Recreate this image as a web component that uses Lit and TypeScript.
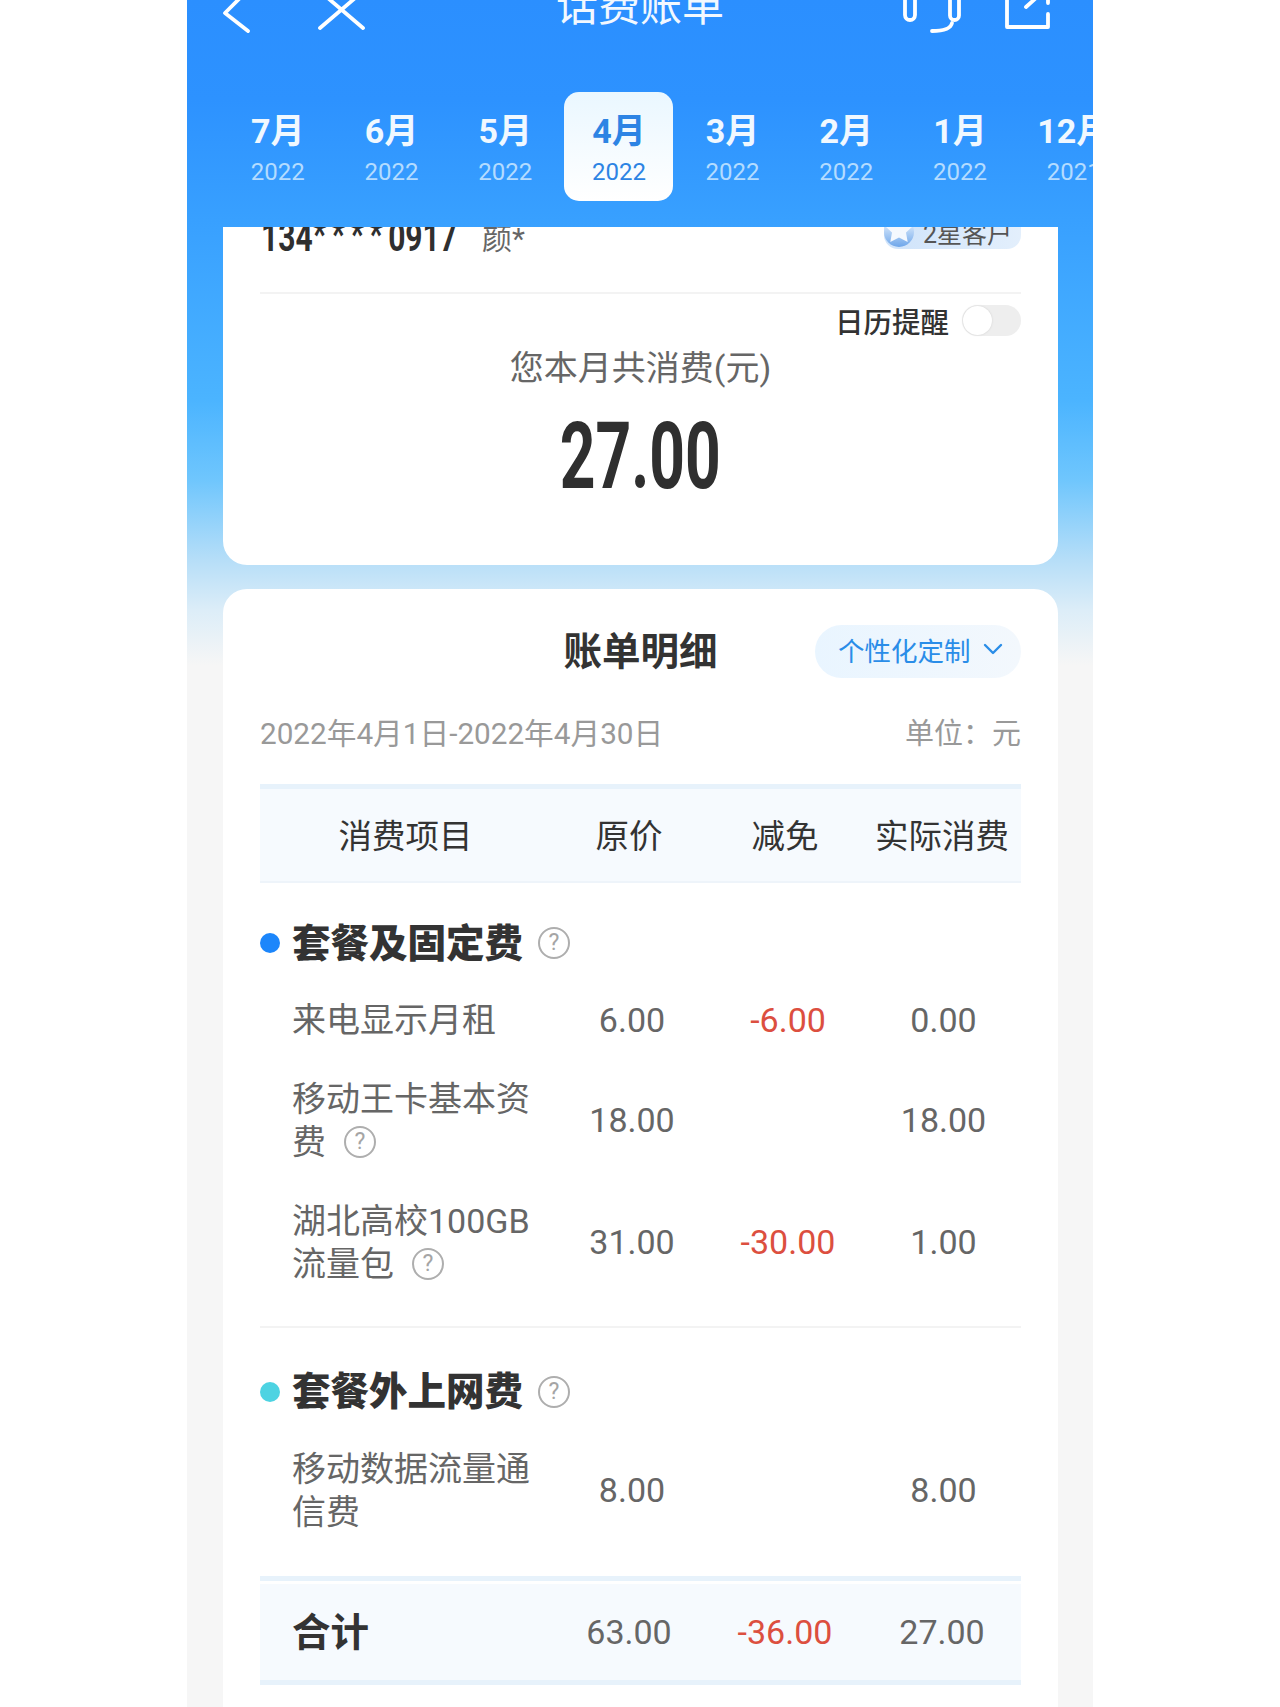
import { LitElement, html, css } from "lit";
import { customElement } from "lit/decorators.js";

const months = [
  ["7月", "2022"], ["6月", "2022"], ["5月", "2022"], ["4月", "2022"],
  ["3月", "2022"], ["2月", "2022"], ["1月", "2022"], ["12月", "2021"],
];

type Row = { name: unknown; a: string; b: string; c: string };

const q = html`<span class="q">?</span>`;

@customElement("app-root")
export class AppRoot extends LitElement {
  static styles = css`
    :host { display: block; width: 1280px; height: 1707px; overflow: hidden; background: #fff;
      font-family: Roboto, "Noto Sans CJK SC", sans-serif; color: #333; }
    .phone { width: 906px; height: 1707px; margin-left: 187px; overflow: hidden;
      display: flex; flex-direction: column;
      background: linear-gradient(180deg, #2b8fff 0, #2d92ff 100px, #38a0ff 220px, #4bb4ff 400px, #6fc6fd 480px, #b6def8 560px, #dcedf8 610px, #f6f6f6 665px); }
    header { height: 227px; flex: none; color: #fff; }
    .nav { height: 60px; margin-top: -23px; display: grid; grid-template-columns: 1fr auto 1fr; align-items: center; }
    .nav .left { display: flex; align-items: center; gap: 60px; padding: 8px 0 0 35px; }
    .nav .right { display: flex; align-items: center; justify-content: flex-end; gap: 40px; padding: 8px 41px 0 0; }
    .nav svg { display: block; fill: none; stroke: #fff; stroke-width: 3.8; stroke-linecap: round; stroke-linejoin: round; }
    .title { font-size: 42px; line-height: 60px; color: #f2f8ff; }
    .tabs { display: flex; margin-top: 55px; padding-left: 34px; }
    .tab { flex: none; width: 109px; height: 109px; margin: 0 2.35px; border-radius: 15px; display: flex; flex-direction: column; align-items: center; }
    .tab .m { font-size: 34px; line-height: 40px; margin-top: 19px; font-weight: 700; color: #f0f8ff; white-space: nowrap; }
    .tab .y { font-size: 24px; line-height: 30px; margin-top: 6px; color: #b4dcff; }
    .tab.on { background: linear-gradient(180deg, #eaf7ff, #fff); }
    .tab.on .m { color: #2d84e4; }
    .tab.on .y { color: #2d84e4; }
    .card { margin: 0 35px 0 36px; background: #fff; padding: 0 37px; flex: none; }
    .c1 { height: 338px; box-sizing: border-box; overflow: hidden; border-radius: 0 0 24px 24px; }
    .who { height: 50px; margin-top: -16px; padding-bottom: 31px; border-bottom: 2px solid #f3f3f3; display: flex; align-items: center; box-sizing: content-box; }
    .tel { flex: none; width: 188px; margin-left: 1px; margin-right: 4px; white-space: nowrap; transform: scaleX(0.75); transform-origin: left center; font-weight: 700; font-size: 40px; color: #2f2f2f; }
    .tel span { letter-spacing: 7px; vertical-align: 3px; }
    .nm { font-size: 30px; color: #666; margin-left: 29px; }
    .badge { margin-left: auto; width: 137px; height: 39px; border-radius: 0 14px 14px 14px; background: linear-gradient(90deg, #cfe3fa, #e3effc); display: flex; align-items: center; font-size: 25px; color: #555; position: relative; top: -7px; }
    .badge span { padding-top: 5px; }
    .badge svg { display: block; flex: none; margin-right: 9px; }
    .cal { display: flex; justify-content: flex-end; align-items: center; margin-top: 11px; height: 31px; gap: 13px; font-size: 28.5px; font-weight: 500; color: #333; }
    .tog { width: 59px; height: 31px; border-radius: 16px; background: #eee; display: block; }
    .tog::before { content: ""; display: block; width: 29px; height: 29px; margin: 1px; border-radius: 50%; background: #fff; box-shadow: 0 0 2px #ccc; }
    .sum { text-align: center; font-size: 34px; line-height: 44px; color: #666; margin-top: 10px; }
    .amt { text-align: center; height: 90px; line-height: 90px; margin-top: 22px; font-weight: 700; font-size: 93px; color: #2f2f2f; }
    .amt span { display: inline-block; transform: scaleX(0.67); }
    .c2 { margin-top: 24px; flex: 1; border-radius: 24px 24px 0 0; padding-top: 36px; }
    .t2 { display: grid; grid-template-columns: 1fr auto 1fr; grid-template-rows: 53px; align-items: center; }
    .t2 h2 { margin: 0; padding-bottom: 8px; font-size: 38.5px; font-weight: 700; color: #333; grid-column: 2; }
    .cust { grid-column: 3; justify-self: end; width: 206px; height: 53px; box-sizing: border-box; padding: 0 0 5px 23px; border-radius: 27px; background: linear-gradient(90deg, #e9f5ff, #f3f8fd); color: #2a8de8; font-size: 26.5px; display: flex; align-items: center; gap: 12px; }
    .cust svg { display: block; fill: none; stroke: #2a8de8; stroke-width: 2.4; stroke-linecap: round; stroke-linejoin: round; }
    .date { display: flex; justify-content: space-between; line-height: 40px; margin-top: 36px; font-size: 29.7px; color: #999; }
    .date span + span { font-size: 29px; }
    .hd { margin-top: 30px; height: 88px; padding-bottom: 4px; border-top: 5px solid #e7f2fb; border-bottom: 2px solid #eef4fa; background: #f6fafe; font-size: 33.5px; color: #333; }
    .g { display: grid; grid-template-columns: 291px 156px 156px 158px; align-items: center; justify-items: center; }
    .sec { display: flex; align-items: center; height: 76px; margin-top: 22px; font-size: 38.5px; font-weight: 700; color: #333; }
    .sec.two { margin-top: 25px; height: 77px; }
    .sec b { padding-bottom: 7px; }
    .dot { width: 20px; height: 20px; border-radius: 50%; margin-right: 12px; background: #1c86fb; flex: none; }
    .dot.c { background: #4dd3e2; }
    .sec .q { margin-left: 15px; }
    .q { display: inline-block; box-sizing: border-box; width: 32px; height: 32px; line-height: 27px; border: 2.5px solid #aeaeae; border-radius: 50%; text-align: center; font-size: 23px; font-weight: 400; color: #a5a5a5; vertical-align: top; margin-top: 5px; }
    .sec .q { margin-top: 0; }
    .n .q { margin-left: 18px; }
    .row { display: grid; grid-template-columns: 294px 156px 156px 155px; align-items: center; justify-items: center; padding: 18px 0; font-size: 34px; color: #666; }
    .row > div:not(.n) { padding-bottom: 2px; }
    .n { justify-self: start; width: 242px; margin-left: 32px; font-size: 34px; line-height: 43px; }
    .neg { color: #dc4f3f; }
    .rule { height: 2px; background: #f3f3f3; margin-top: 22px; }
    .tot { margin-top: 24px; border-top: 5px solid #e7f2fb; padding-top: 3px; }
    .tot .g { height: 96px; background: #f6fafe; border-bottom: 5px solid #e7f2fb; font-size: 34px; color: #666; }
    .tot b { justify-self: start; margin-left: 32px; padding-bottom: 6px; font-size: 38.5px; color: #333; }
  `;

  row(r: Row) {
    return html`<div class="row">
      <div class="n">${r.name}</div><div>${r.a}</div><div class="neg">${r.b}</div><div>${r.c}</div>
    </div>`;
  }

  render() {
    const rows: Row[] = [
      { name: "来电显示月租", a: "6.00", b: "-6.00", c: "0.00" },
      { name: html`移动王卡基本资费${q}`, a: "18.00", b: "", c: "18.00" },
      { name: html`湖北高校100GB流量包${q}`, a: "31.00", b: "-30.00", c: "1.00" },
    ];
    return html`<div class="phone">
      <header>
        <div class="nav">
          <div class="left">
            <svg width="30" height="48" viewBox="0 0 30 48"><path d="M25 4 3 26l23 18"/></svg>
            <svg width="54" height="48" viewBox="0 0 54 48"><path d="M8 41 49 6M51 41 10 6"/></svg>
          </div>
          <div class="title">话费账单</div>
          <div class="right">
            <svg width="64" height="48" viewBox="0 0 64 48"><rect x="7" y="4" width="10" height="29" rx="5"/><rect x="52" y="4" width="9" height="29" rx="4.5"/><path d="M54 36c-1 5-6 8-20 8"/></svg>
            <svg width="50" height="46" viewBox="0 0 50 46"><path d="M24 8H5v31h41V26"/><path d="M24 19 44 1M36 1h10v14"/></svg>
          </div>
        </div>
        <div class="tabs">
          ${months.map((m, i) => html`<div class="tab ${i === 3 ? "on" : ""}"><span class="m">${m[0]}</span><span class="y">${m[1]}</span></div>`)}
        </div>
      </header>

      <section class="card c1">
        <div class="who">
          <span class="tel">134<span>****</span>0917</span>
          <span class="nm">颜*</span>
          <div class="badge">
            <svg width="30" height="39" viewBox="0 0 30 39"><defs><linearGradient id="md" x1="0" y1="0" x2="0" y2="1"><stop offset="0.3" stop-color="#cfe3fa"/><stop offset="1" stop-color="#6ea6ea"/></linearGradient></defs><circle cx="15" cy="22" r="15" fill="url(#md)"/><path d="M15 6l4.400 8.600 9.600 1.400-7 6.600 1.700 9.400-8.700-4.500-8.700 4.500 1.700-9.400-7-6.600 9.600-1.400z" fill="#f4f8fe"/></svg>
            <span>2星客户</span>
          </div>
        </div>
        <div class="cal">日历提醒<span class="tog"></span></div>
        <div class="sum">您本月共消费(元)</div>
        <div class="amt"><span>27.00</span></div>
      </section>

      <section class="card c2">
        <div class="t2">
          <h2>账单明细</h2>
          <div class="cust">个性化定制
            <svg width="20" height="12" viewBox="0 0 20 12"><path d="M2 2l8 8 8-8"/></svg>
          </div>
        </div>
        <div class="date"><span>2022年4月1日-2022年4月30日</span><span>单位：元</span></div>
        <div class="hd g"><div>消费项目</div><div>原价</div><div>减免</div><div>实际消费</div></div>

        <div class="sec"><span class="dot"></span><b>套餐及固定费</b>${q}</div>
        ${rows.map((r) => this.row(r))}
        <div class="rule"></div>

        <div class="sec two"><span class="dot c"></span><b>套餐外上网费</b>${q}</div>
        ${this.row({ name: "移动数据流量通信费", a: "8.00", b: "", c: "8.00" })}

        <div class="tot">
          <div class="g"><b>合计</b><div>63.00</div><div class="neg">-36.00</div><div>27.00</div></div>
        </div>
      </section>
    </div>`;
  }
}
